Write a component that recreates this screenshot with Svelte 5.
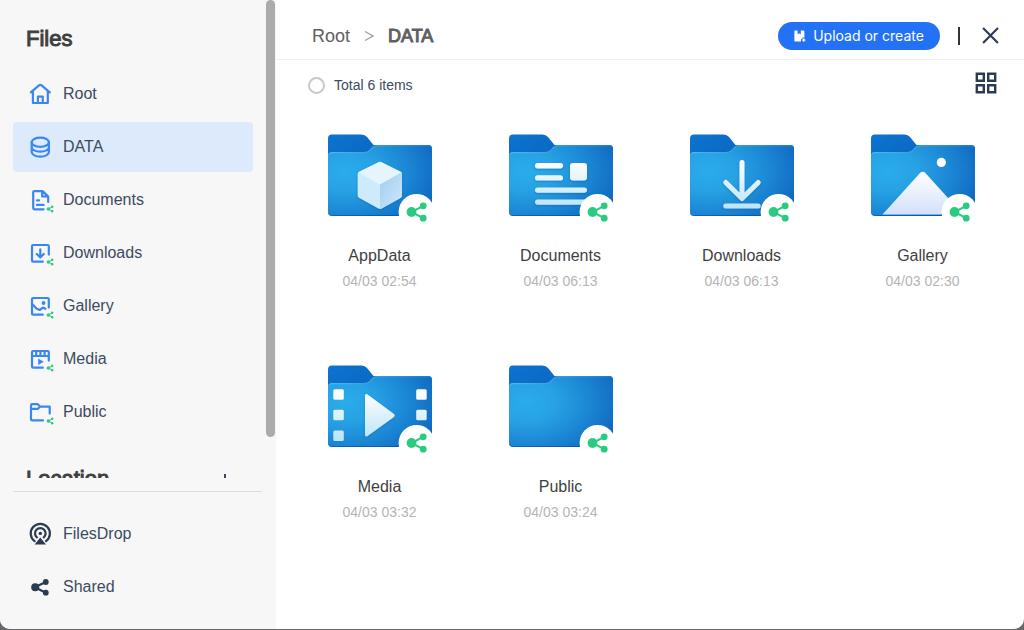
<script lang="ts">
  const places = [
    { id: 'root', name: 'Root', shared: false },
    { id: 'data', name: 'DATA', shared: false },
    { id: 'documents', name: 'Documents', shared: true },
    { id: 'downloads', name: 'Downloads', shared: true },
    { id: 'gallery', name: 'Gallery', shared: true },
    { id: 'media', name: 'Media', shared: true },
    { id: 'public', name: 'Public', shared: true },
  ];

  const folders = [
    { id: 'appdata', name: 'AppData', date: '04/03 02:54' },
    { id: 'documents', name: 'Documents', date: '04/03 06:13' },
    { id: 'downloads', name: 'Downloads', date: '04/03 06:13' },
    { id: 'gallery', name: 'Gallery', date: '04/03 02:30' },
    { id: 'media', name: 'Media', date: '04/03 03:32' },
    { id: 'public', name: 'Public', date: '04/03 03:24' },
  ];

  let current = $state('data');
  let allSelected = $state(false);
</script>

<svg class="defs" aria-hidden="true">
  <defs>
    <radialGradient id="front" cx="0.16" cy="0.36" r="0.95">
      <stop offset="0" stop-color="#2aaceb" />
      <stop offset="0.3" stop-color="#27a2e4" />
      <stop offset="0.65" stop-color="#1b86d4" />
      <stop offset="1" stop-color="#0f66bf" />
    </radialGradient>
    <linearGradient id="back" x1="0" y1="0" x2="1" y2="1">
      <stop offset="0" stop-color="#0c74d0" />
      <stop offset="0.5" stop-color="#0a62bb" />
      <stop offset="1" stop-color="#0853a8" />
    </linearGradient>
    <linearGradient id="edge" x1="0" y1="0" x2="1" y2="0">
      <stop offset="0" stop-color="#4cb9ee" />
      <stop offset="1" stop-color="#1f7acb" />
    </linearGradient>
    <linearGradient id="glyph" gradientUnits="userSpaceOnUse" x1="0" y1="26" x2="0" y2="76">
      <stop offset="0" stop-color="#ffffff" />
      <stop offset="1" stop-color="#b9e3f8" />
    </linearGradient>
    <linearGradient id="hill" x1="0" y1="0" x2="0" y2="1">
      <stop offset="0" stop-color="#ffffff" />
      <stop offset="1" stop-color="#d3e0fa" />
    </linearGradient>
    <linearGradient id="cube-side" x1="0" y1="0" x2="1" y2="1">
      <stop offset="0" stop-color="#9fcdf1" />
      <stop offset="1" stop-color="#cfe8fa" />
    </linearGradient>
    <filter id="drop" x="-20%" y="-20%" width="140%" height="140%">
      <feDropShadow dx="0" dy="1" stdDeviation="1" flood-color="#0a5aa8" flood-opacity="0.45" />
    </filter>
  </defs>
</svg>

<div class="app">
  <aside class="sidebar">
    <div class="scroller">
      <h1 class="heading">Files</h1>
      <nav class="places" aria-label="Files">
        {#each places as p (p.id)}
          <a class="place" class:active={current === p.id} href="#{p.id}" onclick={() => (current = p.id)}>
            <svg class="icon" viewBox="0 0 24 24" aria-hidden="true">
              {#if p.id === 'root'}
                <path d="M2.8 10.4 11 3.3Q12.3 2.3 13.6 3.3L21.8 10.4M4.9 9v12h14.9V9M9.9 21v-6.4h4.9V21" />
              {:else if p.id === 'data'}
                <ellipse cx="12.3" cy="7.2" rx="8.6" ry="4.6" />
                <path d="M3.7 7.2v9.9c0 2.6 3.9 4.6 8.6 4.6s8.6-2 8.6-4.6V7.2M3.7 12.2c0 2.5 3.9 4.5 8.6 4.5s8.6-2 8.6-4.5" />
              {:else if p.id === 'documents'}
                <path d="M15.6 21.3H6.4Q5.2 21.3 5.2 20.1V4.3Q5.2 3.1 6.4 3.1H14.6L20.2 8.6V14M14.2 3.4v5.1h5.6M9 12.4h2M9 16.9h6.6" />
              {:else if p.id === 'downloads'}
                <path d="M14.8 20.7H5.2Q4 20.7 4 19.5V5.2Q4 4 5.2 4H19.6Q20.8 4 20.8 5.2V13.6M12.3 8.4v8M8.8 13l3.5 3.5 3.5-3.5" />
              {:else if p.id === 'gallery'}
                <path d="M14.8 20.7H5.2Q4 20.7 4 19.5V5.2Q4 4 5.2 4H19.6Q20.8 4 20.8 5.2V13.6M4.2 10l4.2 4.4 3.2 1.6 3.4-2.4 2.4 1.2" />
                <circle class="solid" cx="15.6" cy="9" r="1.9" />
              {:else if p.id === 'media'}
                <path d="M14.8 20.7H5.2Q4 20.7 4 19.5V5.2Q4 4 5.2 4H19.6Q20.8 4 20.8 5.2V13.6M4 9H20.8" />
                <path d="M8.2 4v4.6M12.4 4v4.6M16.6 4v4.6" />
                <path class="solid" d="M10.2 11.6v6.4l5.6-3.2z" />
              {:else}
                <path d="M15 20.4H4.2Q3 20.4 3 19.2V5.4Q3 4.2 4.2 4.2H9.8L12 6.6H21.7V13.6M3 8.9H9.8L12 6.6" />
              {/if}
              {#if p.shared}
                <g class="mini">
                  <path d="M24.3 18.8 20.4 21l4 2.3" />
                  <circle cx="20.4" cy="21" r="1.8" />
                  <circle cx="24.2" cy="18.8" r="1.2" />
                  <circle cx="24.2" cy="23.3" r="1.2" />
                </g>
              {/if}
            </svg>
            <span>{p.name}</span>
          </a>
        {/each}
      </nav>
      <div class="location">
        <h2 class="heading">Location</h2>
        <button class="add" aria-label="Add location">
          <svg viewBox="0 0 12 12" aria-hidden="true"><path d="M6 1v10M1 6h10" /></svg>
        </button>
      </div>
    </div>

    <nav class="footer" aria-label="Sharing">
      <a class="place" href="#filesdrop">
        <svg class="icon dark" viewBox="0 0 24 24" aria-hidden="true">
          <path d="M6.6 19.2a9.6 9.6 0 1 1 11.4 0M8.9 15.4a5.3 5.3 0 1 1 6.8 0" />
          <circle class="solid" cx="12.3" cy="11.4" r="1.7" />
          <path class="solid" d="M12.3 15.6 18 22.4H6.6z" />
        </svg>
        <span>FilesDrop</span>
      </a>
      <a class="place" href="#shared">
        <svg class="icon dark" viewBox="0 0 24 24" aria-hidden="true">
          <path d="M17.8 7 6.8 12.3 17.8 17.8" />
          <circle class="dot" cx="7.2" cy="12.3" r="4" />
          <circle class="dot" cx="17.8" cy="7" r="2.9" />
          <circle class="dot" cx="17.8" cy="17.7" r="2.9" />
        </svg>
        <span>Shared</span>
      </a>
    </nav>
    <div class="thumb"></div>
  </aside>

  <main class="main">
    <header class="topbar">
      <nav class="crumbs" aria-label="Breadcrumb">
        <a href="#root">Root</a>
        <svg class="chevron" viewBox="0 0 10 12" aria-hidden="true"><path d="M1 1.5 9 6 1 10.5" /></svg>
        <a class="here" href="#data">DATA</a>
      </nav>
      <button class="upload">
        <svg viewBox="0 0 12 12" aria-hidden="true">
          <path d="M1 0.5H3.6V4.6L5.2 3.3 6.8 4.6V0.5H9.4Q10.4 0.5 10.4 1.5V7.4H8.4V9H7V11.5H1Q0.4 11.5 0.4 10.9V1.1Q0.4 0.5 1 0.5Z" />
          <path d="M9.1 8.6h1.3v1h1v1.2h-1v1H9.1v-1h-1V9.6h1z" />
        </svg>
        Upload or create
      </button>
      <span class="divider"></span>
      <button class="close" aria-label="Close">
        <svg viewBox="0 0 16 16" aria-hidden="true"><path d="M1 1l14 14M15 1 1 15" /></svg>
      </button>
    </header>

    <div class="toolbar">
      <label class="total">
        <input type="checkbox" bind:checked={allSelected} />
        <span>Total {folders.length} items</span>
      </label>
      <button class="layout" aria-label="Grid view">
        <svg viewBox="0 0 22 22" aria-hidden="true">
          <path d="M1.8 1.8h7v7h-7zM13.2 1.8h7v7h-7zM1.8 13.2h7v7h-7zM13.2 13.2h7v7h-7z" />
        </svg>
      </button>
    </div>

    <div class="grid">
      {#each folders as f (f.id)}
        <a class="card" href="#data/{f.id}">
          <svg class="folder" viewBox="0 0 104 88" aria-hidden="true">
            <path fill="url(#back)" d="M0 78V4.5Q0 0.5 4 0.5H33.5Q37 0.5 39 3L45.5 11H100Q104 11 104 15V78Q104 82 100 82H4Q0 82 0 78Z" />
            <path fill="url(#edge)" d="M0 77V22Q0 18 4 18H36Q39 18 41 16.2L44 13Q46 11 49 11H100.5Q104 11 104 14.5V77Q104 80.5 100.5 80.5H3.5Q0 80.5 0 77Z" />
            <path fill="url(#front)" d="M0 77V23Q0 19.3 4 19.3H36.5Q39.6 19.3 41.8 17.3L44.7 14.4Q46.6 12.4 49.5 12.4H100.5Q104 12.4 104 16V77Q104 80.8 100.5 80.8H3.5Q0 80.8 0 77Z" />
            {#if f.id === 'appdata'}
              <g filter="url(#drop)">
                <path fill="#cdebfa" d="M50.5 28.2Q52 27.4 53.5 28.2L72.8 37.8Q74 38.5 74 40V61.5Q74 63 72.8 63.8L53.5 74.4Q52 75.2 50.5 74.4L31 63.8Q29.7 63 29.7 61.5V40Q29.7 38.5 31 37.8Z" />
                <path fill="#e6f5fd" d="M50.5 28.2Q52 27.4 53.5 28.2L73.6 38.6 52 50.4 30.2 38.6Z" />
                <path fill="url(#cube-side)" d="M52 50.4 73.6 38.6Q74 39.2 74 40V61.5Q74 63 72.8 63.8L53.5 74.4Q52.8 74.9 52 74.9Z" />
              </g>
            {:else if f.id === 'documents'}
              <g fill="url(#glyph)" filter="url(#drop)">
                <rect x="26" y="29" width="28" height="5.4" rx="2.7" />
                <rect x="26" y="41.2" width="28" height="5.4" rx="2.7" />
                <rect x="61" y="29" width="17" height="17.6" rx="3" />
                <rect x="26" y="53.4" width="52" height="5.4" rx="2.7" />
                <rect x="26" y="65.4" width="52" height="5.4" rx="2.7" />
              </g>
            {:else if f.id === 'downloads'}
              <path class="arrow" stroke="url(#glyph)" filter="url(#drop)" d="M52 28.5V64M35.8 48.5 52 64.5 68.2 48.5M35.8 71.9H68.2" />
            {:else if f.id === 'gallery'}
              <path fill="url(#hill)" d="M11.5 80.5 48.8 39.2Q51.7 36.4 54.6 39.2L92 80.5Z" />
              <circle fill="#ffffff" cx="70.3" cy="28.4" r="4.6" />
            {:else if f.id === 'media'}
              <g fill="url(#glyph)">
                {#each [5.3, 88.2] as x}
                  {#each [24.2, 44.8, 65.4] as y}
                    <rect {x} {y} width="10.5" height="10.5" rx="1.5" />
                  {/each}
                {/each}
                <path filter="url(#drop)" d="M37 30.8Q37 28 39.6 29.5L66 49Q67.6 50.4 66 51.9L39.6 71Q37 72.5 37 69.8Z" />
              </g>
            {/if}
            <circle fill="#ffffff" cx="88.6" cy="78" r="18" />
            <path class="link" d="M95.2 71.8 83.4 78 95.2 84.2" />
            <g fill="#2acb80">
              <circle cx="83.5" cy="78" r="4.9" />
              <circle cx="95.2" cy="71.8" r="3.4" />
              <circle cx="95.2" cy="84.2" r="3.4" />
            </g>
          </svg>
          <span class="name">{f.name}</span>
          <time class="date">{f.date}</time>
        </a>
      {/each}
    </div>
  </main>
</div>

<style>
  :global(body) { background: #68686a; font-family: "Liberation Sans", Arial, sans-serif; }
  .defs { position: absolute; width: 0; height: 0; }
  a { color: inherit; text-decoration: none; }
  button { padding: 0; border: 0; background: none; cursor: pointer; }
  svg { display: block; }

  .app { box-sizing: border-box; height: calc(100vh - 1px); display: flex; background: #fff; border-radius: 0 0 10px 10px; overflow: hidden; }

  .sidebar { position: relative; flex: 0 0 276px; display: flex; flex-direction: column; background: #f7f7f7; }
  .scroller { flex: 1; min-height: 0; overflow: hidden; padding: 25px 23px 0 13px; margin-bottom: 13px; }
  .heading { margin: 0 0 0 13px; font-size: 22px; line-height: 28px; font-weight: 400; color: #3f3f3f; -webkit-text-stroke: 1px #3f3f3f; }
  .places { display: flex; flex-direction: column; gap: 3px; margin-top: 16px; }
  .place { display: flex; align-items: center; gap: 11px; height: 50px; padding-left: 15px; border-radius: 4px; font-size: 16px; line-height: 20px; color: #3c4b60; }
  .place span { padding-bottom: 1px; }
  .place.active { background: #ddeafc; }
  .icon { width: 24px; height: 24px; overflow: visible; fill: none; stroke: #3a86f3; stroke-width: 2.2; stroke-linecap: round; stroke-linejoin: round; }
  .icon .solid { fill: #3a86f3; stroke: none; }
  .icon.dark { stroke: #2b3c52; stroke-width: 2.2; }
  .icon.dark .solid { fill: #2b3c52; stroke: none; }
  .icon .dot { fill: #2b3c52; stroke: none; }
  .mini { fill: #2acb80; stroke: none; }
  .mini path { fill: none; stroke: #2acb80; stroke-width: 1; }
  .location { display: flex; align-items: center; justify-content: space-between; padding-right: 22px; margin-top: 28px; }
  .add svg { width: 12px; height: 12px; fill: none; stroke: #3c4b60; stroke-width: 2; }
  .footer { display: flex; flex-direction: column; gap: 3px; margin: 0 14px 0 13px; padding: 17px 0; border-top: 1px solid #dcdcdc; }
  .thumb { position: absolute; top: 0; right: 1px; width: 9px; height: calc(100% - 192px); background: #ababab; border-radius: 5px; }

  .main { flex: 1; min-width: 0; }
  .topbar { box-sizing: border-box; height: 60px; display: flex; align-items: center; padding: 12px 25px 0 36px; border-bottom: 1px solid #f0f0f0; }
  .crumbs { flex: 1; display: flex; align-items: center; gap: 14px; font-size: 18px; line-height: 24px; color: #606060; }
  .chevron { width: 10px; height: 12px; fill: none; stroke: #a0a0a0; stroke-width: 1.4; }
  .here { -webkit-text-stroke: 1px #606060; }
  .upload { display: flex; align-items: center; justify-content: center; gap: 7px; width: 162px; height: 28px; border-radius: 14px; background: #2372f5; color: #fff; font-family: Inter, sans-serif; font-size: 14px; }
  .upload svg { width: 12px; height: 12px; fill: #fff; }
  .divider { width: 2px; height: 18px; margin: 0 22px 0 18px; background: #333; }
  .close svg { width: 17px; height: 17px; fill: none; stroke: #2b3c52; stroke-width: 2; }

  .toolbar { display: flex; align-items: center; justify-content: space-between; height: 46px; padding: 0 27px 0 32px; }
  .total { display: flex; align-items: center; gap: 9px; padding-top: 4px; font-size: 14px; color: #3c4b60; }
  .total input { appearance: none; width: 17px; height: 17px; margin: 0; border: 2px solid #c8c8c8; border-radius: 50%; }
  .total input:checked { background: #2372f5; border-color: #2372f5; }
  .layout svg { width: 22px; height: 22px; fill: none; stroke: #2b3c52; stroke-width: 2.4; }

  .grid { display: grid; grid-template-columns: repeat(4, 1fr); row-gap: 76px; padding: 28px 11px 0 13px; }
  .card { display: flex; flex-direction: column; align-items: center; }
  .folder { width: 104px; height: 88px; overflow: hidden; }
  .arrow { fill: none; stroke-width: 5; stroke-linecap: round; stroke-linejoin: round; }
  .link { fill: none; stroke: #2acb80; stroke-width: 2; }
  .name { margin-top: 24px; font-size: 16px; line-height: 20px; color: #3f3f3f; }
  .date { margin-top: 7px; font-size: 14px; line-height: 16px; color: #b4b4b4; }
</style>
